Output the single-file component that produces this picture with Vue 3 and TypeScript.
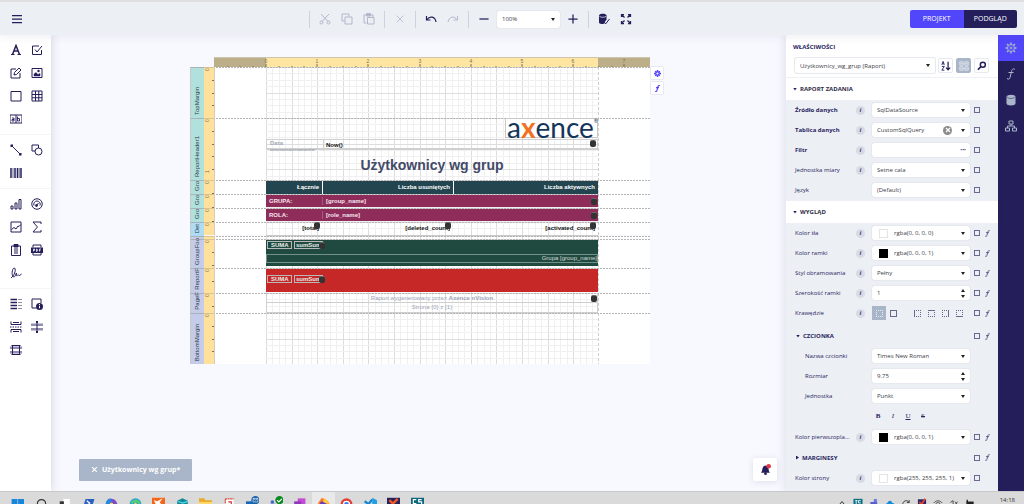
<script setup lang="ts">
import { ref } from 'vue'

const icons: Record<string, string> = {
  menu: '<path d="M2 5h20M2 12h20M2 19h20" stroke-width="2.500"/>',
  text: '<path d="M5 21 12 3l7 18M8 14h8" stroke-width="3"/><path d="M2 21h7M15 21h7" stroke-width="2.4"/>',
  check: '<path d="M16 4H3v17h18v-9"/><path d="m8 11 4 5L22 4"/>',
  edit: '<path d="M12 4H2v18h18V12"/><path d="m8 16 1-5 9-9 4 4-9 9z"/>',
  picture: '<path d="M2 3h20v18H2z"/><path d="M6 18v-4l4-3 4 4 4-2v5z" fill="currentColor" stroke-width="1"/><circle cx="15" cy="8" r="2.4" fill="currentColor" stroke="none"/>',
  panel: '<path d="M2 3h20v19H2z"/>',
  table: '<path d="M2 2h20v20H2zM9 2v20M15.500 2v20M2 9h20M2 15.500h20"/>',
  comb: '<path d="M0 4h24v16H0zM12 4v16" /><path d="M4 10h4v6H4v-3h4M15 7v9h4v-5h-4" stroke-width="1.800"/>',
  line: '<path d="m3 3 18 18"/><path d="M1 1h5v5H1zM18 18h5v5h-5z" fill="currentColor" stroke="none"/>',
  shape: '<path d="M9 14H2V2h13v6"/><circle cx="15" cy="15" r="7"/>',
  barcode: '<path d="M2 2v20M10 2v20M15 2v20M22 2v20" stroke-width="3"/><path d="M6 2v20M18.500 2v20" stroke-width="1.300"/>',
  chart: '<path d="M2 16h4v6H2zM10 10h4v12h-4zM18 3h4v19h-4z"/>',
  gauge: '<circle cx="12" cy="12" r="10.500"/><path d="M6 15a6.500 6.500 0 1 1 12 0M11 15l4-5"/><circle cx="11" cy="15" r="2" fill="currentColor"/>',
  spark: '<path d="M2 2h20v20H2zM3 17l5-4 4 3 4-6 2 1 4-4"/>',
  sigma: '<path d="M20 6V2H4l9 10-9 10h16v-4"/>',
  clip: '<path d="M3 4h18v19H3zM8 10h8M8 14h8M8 18h8"/><path d="M8 1h8v5H8z" fill="currentColor"/>',
  pdf: '<path d="M4 7V2h16v5M4 18v4h16v-4"/><path d="M0 7h24v11H0z" fill="currentColor" stroke="none"/><path d="M5 15v-5h2v3H5M11 10v5c3 0 3-5 0-5M17 15v-5h3M17 12.500h2" stroke="#fff" stroke-width="1.500"/>',
  sign: '<path d="M2 22C8 18 13 6 9 2 4 1 3 16 6 19c4 3 5-4 7-7-1 4-1 8 2 4 2-3 2 2 4 1l4-3"/>',
  toc: '<path d="M1 3h13M1 9h13M1 15h13M1 21h13" stroke-width="3"/><path d="M17 3h2M21 3h2M17 9h2M21 9h2M17 15h2M21 15h2M17 21h2M21 21h2"/>',
  info: '<path d="M11 20H2V2h18v8"/><circle cx="17" cy="17" r="7" fill="currentColor" stroke="none"/><path d="M17 12v2M17 15.500v5" stroke="#fff"/>',
  pagebreak: '<path d="M2 1v6h20V1M2 23v-6h20v6M6 3h12M6 21h12"/><path d="M0 12h24" stroke-dasharray="3 2"/>',
  cross: '<path d="M0 7.500h24M0 16.500h24" stroke-width="5" opacity=".5"/><path d="M12 1v22"/><path d="M12 0v4M12 20v4" stroke-width="4"/>',
  crossbox: '<path d="M0 7.500h24M0 16.500h24" stroke-width="5" opacity=".5"/><path d="M5 2v20M19 2v20M3 3h18M3 21h18"/>',
  cut: '<path d="m4 2 14 15M20 2 6 17"/><circle cx="5" cy="19" r="3"/><circle cx="19" cy="19" r="3"/>',
  copy: '<path d="M7 16H2V2h14v5M8 8h14v14H8z"/>',
  paste: '<path d="M7 20H2V4h18v4M9 9h13v13H9z"/><path d="M7 1h8v5H7z" fill="currentColor"/>',
  close: '<path d="m4 4 16 16M20 4 4 20"/>',
  undo: '<path d="M3 6v8h8M4 13c5-7 16-7 18 5" stroke-width="2.400"/>',
  redo: '<path d="M21 6v8h-8M20 13C15 6 4 6 2 18"/>',
  minus: '<path d="M1 12h22" stroke-width="3"/>',
  plus: '<path d="M1 12h22M12 1v22" stroke-width="3"/>',
  validate: '<path d="M2 5c0-5 15-5 15 0v8l-4 6-2 3C6 22 2 21 2 19z" fill="currentColor" stroke="none"/><path d="M3 7c3 2 10 2 13 0" stroke="#eceff4" stroke-width="1.500"/><path d="m11 17 4 5 8-10"/>',
  full: '<path d="M3 8V3h5M16 3h5v5M21 16v5h-5M8 21H3v-5M3 3l6 6M21 3l-6 6M21 21l-6-6M3 21l6-6" stroke-width="2.500"/>',
  gear: '<circle cx="12" cy="12" r="7"/><circle cx="12" cy="12" r="2"/><path d="M12 1v4M12 19v4M1 12h4M19 12h4M4 4l3 3M17 17l3 3M20 4l-3 3M7 17l-3 3" stroke-width="3"/>',
  gearSolid: '<circle cx="12" cy="12" r="6" stroke-width="5"/><path d="M12 0v5M12 19v5M0 12h5M19 12h5M4 4l3 3M17 17l3 3M20 4l-3 3M7 17l-3 3" stroke-width="5"/>',
  fx: '<path d="M20 3c-4-3-6 0-7 4l-3 12c-1 4-3 4-6 2M7 9h10"/>',
  db: '<path d="M3 6c0-6 18-6 18 0v13c0 5-18 5-18 0z" fill="currentColor" stroke="none"/><path d="M4 6c2 4 14 4 16 0" stroke-width="1" stroke="#241f5b"/>',
  tree: '<path d="M8 2h8v6H8zM1 16h8v6H1zM15 16h8v6h-8zM12 8v4M5 16v-4h14v4"/>',
  sort: '<path d="M2 9l3-8 3 8M3 7h4M2 13h6l-6 9h6" stroke-width="2.200"/><path d="M17 2v19M12 16l5 5 5-5" stroke-width="3"/>',
  group: '<path d="M2 2h8v8H2zM14 2h8v8h-8zM2 14h8v8H2zM14 14h8v8h-8z"/><path d="M4 6h4M16 6h4M4 18h4M16 18h4"/>',
  search: '<circle cx="14" cy="9" r="6" stroke-width="3.500"/><path d="m9 14-7 7" stroke-width="4"/>',
  bell: '<path d="M2 19c4-2 2-11 6-14 2-2 6-2 8 0 4 3 2 12 6 14z" fill="currentColor" stroke="none"/><circle cx="12" cy="21" r="3" fill="currentColor" stroke="none"/><circle cx="19" cy="5" r="5" fill="#e0364c" stroke="none"/>',
}

const toolGroups = [
  ['text', 'check', 'edit', 'picture', 'panel', 'table', 'comb'],
  ['line', 'shape', 'barcode'],
  ['chart', 'gauge', 'spark', 'sigma', 'clip', 'pdf', 'sign'],
  ['toc', 'info', 'pagebreak', 'cross', 'crossbox'],
]

interface Band { id: string; label: string; h: number; tone: string }
const bands: Band[] = [
  { id: 'top', label: 'TopMargin', h: 51, tone: 'mint' },
  { id: 'header', label: 'ReportHeader1', h: 62, tone: 'mint' },
  { id: 'heads', label: 'Gro', h: 14, tone: 'mint' },
  { id: 'group', label: 'Gro', h: 14, tone: 'mint' },
  { id: 'role', label: 'Gro', h: 14, tone: 'mint' },
  { id: 'detail', label: 'Det', h: 13, tone: 'sky' },
  { id: 'gap', label: '', h: 3, tone: 'lilac' },
  { id: 'gfoot', label: 'GroupFoo', h: 29, tone: 'lilac' },
  { id: 'rfoot', label: 'ReportF', h: 25, tone: 'lilac' },
  { id: 'pfoot', label: 'PageF', h: 20, tone: 'lilac' },
  { id: 'bottom', label: 'BottomMargin', h: 51, tone: 'lilac' },
]

const INCH = 51.2
const PAGE_X = 62
const PAGE_W = 332
const steps = (length: number, unit: number) =>
  Array.from({ length: Math.floor(length / unit) + 1 }, (_, i) => ({ i, at: Math.round(i * unit) }))
const columns = steps(PAGE_W, INCH / 8)
const hTicks = Array.from({ length: 32 }, (_, i) => ({ i: i - 3, at: Math.round(52 + (i - 3) * (INCH / 4)) }))
  .filter((t) => t.at < 436)

const task = ref('Użytkownicy_wg_grup (Raport)')

interface Row {
  id: string; label: string; kind: 'select' | 'color' | 'number' | 'text' | 'edges'
  value?: string; strong?: boolean; info?: boolean; fx?: boolean; swatch?: string; clear?: boolean
}
const taskRows: Row[] = [
  { id: 'source', label: 'Źródło danych', kind: 'select', value: 'SqlDataSource', strong: true, info: true },
  { id: 'table', label: 'Tablica danych', kind: 'select', value: 'CustomSqlQuery', strong: true, info: true, clear: true },
  { id: 'filter', label: 'Filtr', kind: 'text', value: '', strong: true, info: true },
  { id: 'unit', label: 'Jednostka miary', kind: 'select', value: 'Setne cala', info: true },
  { id: 'lang', label: 'Język', kind: 'select', value: '(Default)' },
]
const lookRows: Row[] = [
  { id: 'back', label: 'Kolor tła', kind: 'color', value: 'rgba(0, 0, 0, 0)', swatch: 'clear', info: true, fx: true },
  { id: 'border', label: 'Kolor ramki', kind: 'color', value: 'rgba(0, 0, 0, 1)', swatch: 'black', info: true, fx: true },
  { id: 'dash', label: 'Styl obramowania', kind: 'select', value: 'Pełny', info: true, fx: true },
  { id: 'bwidth', label: 'Szerokość ramki', kind: 'number', value: '1', info: true, fx: true },
  { id: 'edges', label: 'Krawędzie', kind: 'edges', info: true, fx: true },
]
const fontRows: Row[] = [
  { id: 'fname', label: 'Nazwa czcionki', kind: 'select', value: 'Times New Roman' },
  { id: 'fsize', label: 'Rozmiar', kind: 'number', value: '9.75' },
  { id: 'funit', label: 'Jednostka', kind: 'select', value: 'Punkt' },
]
const foreRow: Row = { id: 'fore', label: 'Kolor pierwszopla...', kind: 'color', value: 'rgba(0, 0, 0, 1)', swatch: 'black', info: true, fx: true }
const pageRow: Row = { id: 'page', label: 'Kolor strony', kind: 'color', value: 'rgba(255, 255, 255, 1)', swatch: 'clear', info: true }

type Block = { rows: Row[]; title?: string; sub?: string; open?: boolean; nested?: boolean; format?: boolean }
const blocks: Block[] = [
  { title: 'RAPORT ZADANIA', rows: taskRows },
  { title: 'WYGLĄD', rows: lookRows },
  { sub: 'CZCIONKA', open: true, rows: fontRows, nested: true, format: true },
  { rows: [foreRow] },
  { sub: 'MARGINESY', open: false, rows: [pageRow] },
]

const apps: { name: string; art: string }[] = [
  { name: 'Start', art: '<path d="M1 1h10v10H1zM12 1h10v10H12z" fill="#1787dc"/>' },
  { name: 'Szukaj', art: '<circle cx="11" cy="9" r="7" fill="none" stroke="#333" stroke-width="2"/>' },
  { name: 'Widok zadań', art: '<path d="M9 1h11v10H9z" fill="#fff"/><path d="M3 5h7v7H3z" fill="#333"/>' },
  { name: 'PowerShell', art: '<path d="M6 1h15l-4 13H2z" fill="#2b5fc4"/><path d="m8 4 5 4-4 3" stroke="#fff" fill="none" stroke-width="2"/>' },
  { name: 'Copilot', art: '<path d="M1 9C3 1 7-1 12 1l3 3-5 9H3z" fill="#2788e2"/><path d="M10 1c7-1 11 4 11 12h-9z" fill="#7a4cc8"/><circle cx="11" cy="10" r="3" fill="#ffd15c"/>' },
  { name: 'Edge', art: '<circle cx="11" cy="10" r="10" fill="#28a8c8"/><path d="M4 8c5-6 12-4 14 1" stroke="#54ce75" stroke-width="4" fill="none"/><circle cx="11" cy="9" r="2" fill="#f9d35d"/>' },
  { name: 'Axence', art: '<path d="M0-1h22v15H0z" fill="#f76516"/><path d="m3 3 6 2 9-5-5 7 4 4H7z" fill="#fff"/>' },
  { name: 'Konsola', art: '<path d="m2 4 9-4 9 4v10H2z" fill="#118999"/><path d="m3 5 8 3 9-3" stroke="#5dd9df" fill="none" stroke-width="2"/>' },
  { name: 'Pliki', art: '<path d="M0 0h9l2 3h11v11H0z" fill="#e8a92c"/><path d="M0 6h22v8H0z" fill="#ffd867"/>' },
  { name: 'Notatnik', art: '<path d="M4 1h14v14H4z" fill="#fff"/><path d="M4 1h14M4 1v12" stroke="#d94432" stroke-width="2" stroke-dasharray="3 1"/><path d="M9 6h5v6" stroke="#c33" fill="none" stroke-width="2"/>' },
  { name: 'Outlook', art: '<path d="M0 5h14v9H0z" fill="#1668ba"/><circle cx="16" cy="3" r="7" fill="#165fa7"/><path d="M12 0h8v6h-8zl4 3 4-3" fill="none" stroke="#fff"/>' },
  { name: 'Teams', art: '<circle cx="4" cy="6" r="3" fill="#4b62ca"/><path d="M0 9h10v5H0z" fill="#6276d8"/><circle cx="16" cy="3" r="7" fill="#0a8b22"/><path d="m12 3 3 3 5-5" fill="none" stroke="#fff" stroke-width="2"/>' },
  { name: 'Projekt', art: '<path d="M8 0h13v14H8z" fill="#c54bd5"/><path d="M2 5h12v9H2z" fill="#8d39ba"/>' },
  { name: 'Firefox', art: '<path d="M1 14C1 5 6 4 8-1c3 3 5 1 7 3 5 4 7 7 6 12z" fill="#ff7c24"/><circle cx="10" cy="10" r="5" fill="#673bc0"/><path d="m13-1 8 11-11-4z" fill="#ffd53e"/>' },
  { name: 'Chrome', art: '<circle cx="11" cy="10" r="10" fill="#e23f35"/><path d="M1 10c0 8 10 9 10 9v-9z" fill="#22a652"/><circle cx="11" cy="10" r="5" fill="#3978e9" stroke="#fff" stroke-width="2"/>' },
  { name: 'Code', art: '<path d="m1 5 13 9M14 2 4 14" stroke="#1688d1" stroke-width="4"/><path d="m14-1 8 4v11h-8z" fill="#219ee6"/>' },
  { name: 'Analiza', art: '<path d="M0-1h22v15H0z" fill="#26225d"/><path d="m4 3 6 6 8-8" fill="none" stroke="#f15822" stroke-width="4"/>' },
  { name: 'Skrypty', art: '<path d="M0-1h22v15H0z" fill="#0b667f"/><path d="M9 2H4v7h5M18 2h-5v4h5v5h-6" fill="none" stroke="#fff" stroke-width="2"/>' },
]
const tray: string[] = [
  '<path d="m6 12 5-6 5 6" fill="none" stroke="#222" stroke-width="2"/>',
  '<path d="M1 0h20v14H1z" fill="#0b7187"/><path d="M5 4h5M7 4v8M17 4h-5v5h5" stroke="#fff" fill="none" stroke-width="2"/>',
  '<circle cx="14" cy="4" r="4" fill="#7278e2"/><path d="M3 7h15v7H3z" fill="#555fca"/>',
  '<path d="M2 14c0-5 4-4 5-8 6-5 9 2 9 3 5 0 5 4 4 5z" fill="#158bdc"/>',
  '<path d="M4 13c-1-9 10-12 14-5V3M18 8h-5" fill="none" stroke="#333" stroke-width="2"/>',
  '<path d="M2 1h18v13H2z" fill="#29266a"/><path d="m5 7 5 5 8-12" fill="none" stroke="#e4432f" stroke-width="4"/>',
  '<path d="M2 9c4-6 14-6 18 0M5 12c4-5 8-5 12 0" fill="none" stroke="#444" stroke-width="2"/>',
  '<path d="m3 8 6-4v10M13 6l5 6M14 12l5-6" fill="none" stroke="#444" stroke-width="2"/>',
  '<path d="M3 6h16v8H3z" fill="#222"/><path d="M5 2v6" stroke="#222" stroke-width="3"/>',
]
</script>

<template>
  <div class="app">
    <header class="topbar">
      <button class="icon menu" aria-label="Menu"><svg viewBox="0 0 24 24" v-html="icons.menu" /></button>
      <div class="tools">
        <i class="sep" />
        <button class="icon off" aria-label="Wytnij"><svg viewBox="0 0 24 24" v-html="icons.cut" /></button>
        <button class="icon off" aria-label="Kopiuj"><svg viewBox="0 0 24 24" v-html="icons.copy" /></button>
        <button class="icon off" aria-label="Wklej"><svg viewBox="0 0 24 24" v-html="icons.paste" /></button>
        <i class="sep" />
        <button class="icon off small" aria-label="Usuń"><svg viewBox="0 0 24 24" v-html="icons.close" /></button>
        <i class="sep" />
        <button class="icon" aria-label="Cofnij"><svg viewBox="0 0 24 24" v-html="icons.undo" /></button>
        <button class="icon off" aria-label="Ponów"><svg viewBox="0 0 24 24" v-html="icons.redo" /></button>
        <i class="sep" />
        <div class="zoom">
          <button class="icon small" aria-label="Pomniejsz"><svg viewBox="0 0 24 24" v-html="icons.minus" /></button>
          <span class="pick"><select aria-label="Powiększenie"><option>100%</option></select></span>
          <button class="icon small" aria-label="Powiększ"><svg viewBox="0 0 24 24" v-html="icons.plus" /></button>
        </div>
        <i class="sep" />
        <button class="icon" aria-label="Sprawdź"><svg viewBox="0 0 24 24" v-html="icons.validate" /></button>
        <button class="icon" aria-label="Pełny ekran"><svg viewBox="0 0 24 24" v-html="icons.full" /></button>
      </div>
      <div class="modes">
        <button class="mode on">PROJEKT</button>
        <button class="mode">PODGLĄD</button>
      </div>
    </header>

    <main class="body">
      <nav class="toolbox" aria-label="Elementy">
        <div v-for="(g, gi) in toolGroups" :key="gi" class="toolgroup">
          <button v-for="t in g" :key="t" class="icon" :aria-label="t"><svg viewBox="0 0 24 24" v-html="icons[t]" /></button>
        </div>
      </nav>

      <section class="canvas">
        <div class="stage">
          <div class="report">
            <div class="hruler">
              <svg width="436" height="10" viewBox="0 0 436 10">
                <rect width="436" height="10" fill="#bcae88" />
                <rect x="52" width="332" height="10" fill="#ffe5a2" />
                <path d="M0 .5h436" stroke="#cfc5ad" />
                <g v-for="t in hTicks" :key="t.i">
                  <path :d="`M${t.at} 10v${t.i % 4 === 0 ? -3 : -1}`" stroke="#77705e" />
                  <text v-if="t.i % 4 === 0" :x="t.at" y="6" text-anchor="middle" class="num">{{ t.i / 4 }}</text>
                </g>
              </svg>
            </div>
            <div v-for="b in bands" :key="b.id" class="band" :class="`band-${b.id}`">
              <div class="tag" :class="b.tone"><span>{{ b.label }}</span></div>
              <svg class="paper" width="446" :height="b.h" :viewBox="`0 0 446 ${b.h}`">
                <rect width="446" :height="b.h" fill="#fff" />
                <rect width="10" :height="b.h" fill="#ffe19b" />
                <template v-for="c in columns" :key="'c' + c.i">
                  <path :d="`M${PAGE_X + c.at}.5 0V${b.h}`" :stroke="c.i % 4 === 0 ? '#dcdcdc' : '#f0f0f0'" />
                </template>
                <template v-for="r in steps(b.h, INCH / 8)" :key="'r' + r.i">
                  <path :d="`M${PAGE_X} ${r.at}.5h${PAGE_W}`" :stroke="r.i % 4 === 0 ? '#dedede' : '#f0f0f0'" />
                </template>
                <template v-for="r in steps(b.h, INCH / 4)" :key="'t' + r.i">
                  <path :d="`M8 ${r.at}.5h2`" stroke="#77705e" />
                  <text v-if="r.i % 4 === 0 && r.at + 5 < b.h" class="num" :transform="`translate(5 ${r.at + 4}) rotate(-90)`">{{ r.i / 4 }}</text>
                </template>
                <path :d="`M${PAGE_X + PAGE_W}.5 0V${b.h}`" stroke="#cfcfcf" stroke-dasharray="3 2" />
                <path d="M0 .5h10" stroke="#d9c591" />
                <path d="M12 .5h434" stroke="#b4b4b4" stroke-dasharray="2 1" />
                <path :d="`M10.5 0V${b.h}`" stroke="#d4cdb9" />
              </svg>

              <div v-if="b.id === 'header'" class="content header">
                <div class="logo">a<b>x</b>ence<sup>®</sup></div>
                <div class="meta">
                  <span class="meta-label">Data wygenerowania:</span>
                  <span class="meta-value">Now()</span>
                  <i class="source" />
                </div>
                <h1>Użytkownicy wg grup</h1>
              </div>
              <div v-else-if="b.id === 'heads'" class="content cols heads">
                <span>Łącznie</span><span>Liczba usuniętych</span><span>Liczba aktywnych</span>
              </div>
              <div v-else-if="b.id === 'group'" class="content plum"><span>GRUPA:</span><span>[group_name]</span><i class="source" /></div>
              <div v-else-if="b.id === 'role'" class="content plum"><span>ROLA:</span><span>[role_name]</span><i class="source" /></div>
              <div v-else-if="b.id === 'detail'" class="content cols detail">
                <span>[total]<i class="source" /></span><span>[deleted_count]<i class="source" /></span><span>[activated_count]<i class="source" /></span>
              </div>
              <div v-else-if="b.id === 'gfoot'" class="content sums green">
                <div class="sum"><span>SUMA</span><span>sumSum<i class="source" /></span></div>
                <div class="note">Grupa [group_name]</div>
              </div>
              <div v-else-if="b.id === 'rfoot'" class="content sums red">
                <div class="sum"><span>SUMA</span><span>sumSum<i class="source" /></span></div>
              </div>
              <div v-else-if="b.id === 'pfoot'" class="content foot">
                <div>Raport wygenerowany przez&nbsp;<b>Axence nVision</b><i class="source" /></div>
                <div>Strona {0} z {1}</div>
              </div>
            </div>
          </div>
          <div class="quick">
            <button class="icon" aria-label="Ustawienia"><svg viewBox="0 0 24 24" v-html="icons.gearSolid" /></button>
            <button class="icon" aria-label="Wyrażenia"><svg viewBox="0 0 24 24" v-html="icons.fx" /></button>
          </div>
        </div>
        <footer class="docs">
          <button class="doc"><svg viewBox="0 0 24 24" v-html="icons.close" />Użytkownicy wg grup*</button>
          <button class="bell icon" aria-label="Powiadomienia"><svg viewBox="0 0 24 24" v-html="icons.bell" /></button>
        </footer>
      </section>

      <aside class="props">
        <div class="props-head">
          <h2>WŁAŚCIWOŚCI</h2>
          <div class="finder">
            <span class="pick outlined"><select v-model="task" aria-label="Element"><option>{{ task }}</option></select></span>
            <button class="icon tile" aria-label="Sortuj"><svg viewBox="0 0 24 24" v-html="icons.sort" /></button>
            <button class="icon tile active" aria-label="Grupuj"><svg viewBox="0 0 24 24" v-html="icons.group" /></button>
            <button class="icon tile" aria-label="Szukaj"><svg viewBox="0 0 24 24" v-html="icons.search" /></button>
          </div>
        </div>
        <section v-for="(bl, bi) in blocks" :key="bi" :class="{ nested: bl.nested }">
          <button v-if="bl.title" class="section"><i class="caret" />{{ bl.title }}</button>
          <div v-if="bl.sub" class="row sub">
            <button><i class="caret" :class="{ shut: !bl.open }" />{{ bl.sub }}</button>
            <input type="checkbox" :aria-label="bl.sub" />
            <button class="fx" aria-label="Wyrażenie"><svg viewBox="0 0 24 24" v-html="icons.fx" /></button>
          </div>
          <div class="rows" :class="{ first: bl.title }">
            <div v-for="r in bl.rows" :key="r.id" class="row">
              <label :for="r.id" :class="{ strong: r.strong }">{{ r.label }}</label>
              <button v-if="r.info" class="help" :aria-label="'Informacja: ' + r.label">i</button>
              <span v-if="r.kind === 'select' || r.kind === 'color'" class="pick field" :class="{ tinted: r.swatch }">
                <select :id="r.id"><option>{{ r.value }}</option></select>
                <i v-if="r.swatch" class="swatch" :class="r.swatch" />
                <button v-if="r.clear" class="wipe" aria-label="Wyczyść"><svg viewBox="0 0 24 24" v-html="icons.close" /></button>
              </span>
              <span v-else-if="r.kind === 'number'" class="field entry">
                <input :id="r.id" type="text" inputmode="decimal" :value="r.value" />
                <span class="spin"><button aria-label="Więcej" class="up" /><button aria-label="Mniej" class="down" /></span>
              </span>
              <span v-else-if="r.kind === 'text'" class="field entry">
                <input :id="r.id" type="text" :value="r.value" />
                <button class="dots" aria-label="Edytuj">•••</button>
              </span>
              <span v-else class="field edges">
                <button :id="r.id" class="pressed" aria-label="Brak"><i /></button>
                <button class="all" aria-label="Wszystkie"><i /></button>
                <button v-for="s in ['left', 'top', 'right', 'bottom']" :key="s" :class="s" :aria-label="s"><i /></button>
              </span>
              <template v-if="!bl.nested">
                <input type="checkbox" :aria-label="'Resetuj: ' + r.label" />
                <button v-if="r.fx" class="fx" aria-label="Wyrażenie"><svg viewBox="0 0 24 24" v-html="icons.fx" /></button>
              </template>
            </div>
            <div v-if="bl.format" class="row">
              <div class="field format">
                <button><b>B</b></button><button><em>I</em></button><button><u>U</u></button><button><s>S</s></button>
              </div>
            </div>
          </div>
        </section>
      </aside>

      <nav class="rail" aria-label="Panele">
        <button class="icon on" aria-label="Właściwości"><svg viewBox="0 0 24 24" v-html="icons.gear" /></button>
        <button class="icon" aria-label="Wyrażenia"><svg viewBox="0 0 24 24" v-html="icons.fx" /></button>
        <button class="icon" aria-label="Dane"><svg viewBox="0 0 24 24" v-html="icons.db" /></button>
        <button class="icon" aria-label="Struktura"><svg viewBox="0 0 24 24" v-html="icons.tree" /></button>
      </nav>
    </main>

    <footer class="taskbar">
      <div class="apps">
        <button v-for="a in apps" :key="a.name" :aria-label="a.name" :class="{ current: a.name === 'Firefox' }"><svg viewBox="0 -4 22 22" v-html="a.art" /></button>
      </div>
      <div class="tray"><svg v-for="(t, i) in tray" :key="i" viewBox="0 -4 22 22" v-html="t" /></div>
      <time>14:18</time>
    </footer>
  </div>
</template>

<style>
html, body, #app { height: 100%; }
</style>

<style scoped>
* { box-sizing: border-box; }
.app {
  display: flex; flex-direction: column; height: 100vh; overflow: hidden;
  font-family: "Open Sans", "Noto Sans", sans-serif; font-size: 6px; line-height: 8px; color: #29255f;
  background: #f8f9ff;
}
button, select, input { font: inherit; color: inherit; margin: 0; padding: 0; border: 0; background: none; }
button { cursor: pointer; }
svg { display: block; }
i { font-style: normal; }
.icon { display: grid; place-items: center; color: #241f5b; }
.icon svg, .fx svg, .doc svg, .wipe svg { fill: none; stroke: currentColor; stroke-width: 2; }

.topbar {
  flex: none; display: flex; align-items: center; height: 35px; padding-right: 7px; padding-top: 1px;
  border-top: 2px solid #dfdfe1; background: #eceff4; position: relative; z-index: 2;
  box-shadow: 0 2px 8px rgba(60, 60, 100, .08);
}
.menu { width: 32px; padding-left: 2px; }
.menu svg { width: 12px; height: 12px; }
.tools { flex: 1; display: flex; align-items: center; justify-content: center; gap: 8px; }
.tools .icon { width: 14px; height: 16px; }
.tools svg { width: 12px; height: 12px; }
.tools .small svg { width: 10px; height: 10px; }
.tools .off { color: #b5b6cb; }
.sep { width: 1px; height: 17px; background: #cdd2de; }
.zoom { display: flex; align-items: center; gap: 6px; }
.zoom .pick { width: 63px; height: 17px; }
.modes { display: flex; width: 107px; height: 18px; border-radius: 2px; overflow: hidden; }
.mode { flex: 1; background: #241f5b; color: #fff; font-size: 7px; }
.mode.on { background: #5246fb; }

.pick { display: grid; align-items: center; min-width: 0; background: #fff; border-radius: 2px; box-shadow: 0 0 1px rgba(60, 70, 110, .35); }
.pick > * { grid-area: 1 / 1; }
.pick select { appearance: none; width: 100%; height: 100%; padding: 0 14px 0 5px; color: #3c3c46; line-height: 8px; }
.pick::after {
  content: ""; grid-area: 1 / 1; justify-self: end; margin-right: 5px; pointer-events: none;
  border: 2px solid transparent; border-top: 3px solid #222; border-bottom: 0;
}

.body { flex: 1; min-height: 0; display: flex; }
.toolbox { flex: none; width: 51px; padding-top: 3px; background: #fff; box-shadow: 2px 0 8px rgba(60, 60, 100, .15); z-index: 1; }
.toolgroup { display: grid; grid-template-columns: 21px 21px; grid-auto-rows: 23px; padding: 0 5px 4px; }
.toolgroup + .toolgroup { padding-top: 3px; border-top: 1px solid #f5f5f9; }
.toolgroup svg { width: 12px; height: 12px; }

.canvas { flex: 1; min-width: 0; display: flex; flex-direction: column; }
.stage { display: flex; justify-content: center; padding: 22px 0 0 16px; }
.report { width: 460px; font-family: "Liberation Sans", Arial, sans-serif; line-height: 7px; }
.hruler { padding-left: 24px; }
.num { font: 5px "Liberation Sans", Arial, sans-serif; fill: #77705e; }
.band { display: grid; grid-template-columns: 14px 62px 332px 52px; }
.tag {
  grid-area: 1 / 1; min-height: 0; display: flex; flex-direction: column; justify-content: flex-end; align-items: center;
  padding-bottom: 3px; color: #2f3a44; border-top: 1px solid #a9b3bb; border-left: 1px solid #c4cad0; contain: size;
}
.band-gap .tag { padding: 0; }
.tag span { writing-mode: vertical-rl; transform: rotate(180deg); white-space: nowrap; }
.mint { background: #b1e1dc; }
.sky { background: #aedcf2; }
.lilac { background: #c5cce9; }
.paper { grid-area: 1 / 2 / 2 / 5; }
.content { grid-area: 1 / 3; min-width: 0; min-height: 0; font-weight: 700; }
.source { flex: none; width: 6px; height: 7px; border-radius: 2px; background: #333; border-top: 1px solid #666; }

.header { display: flex; flex-direction: column; }
.logo {
  align-self: flex-end; display: flex; width: 93px; height: 20px; padding-left: 1px; border: 1px solid #c8c8c8;
  font-family: Lato, sans-serif; font-size: 28px; font-weight: 400; line-height: 16px; color: #14355a; background: #fff;
}
.logo b { color: #f37021; font-weight: 700; }
.logo sup { font-size: 5px; line-height: 5px; }
.meta { display: grid; grid-template-columns: 56px 1fr 7px; height: 11px; margin-top: 1px; border: 1px solid #d0d0d0; border-bottom-width: 2px; }
.meta-label { color: #a3a7b5; padding: 0 3px; overflow: hidden; }
.meta-value { padding: 2px; color: #111; border-left: 1px solid #d0d0d0; }
h1 { margin: 0; flex: 1; display: grid; place-items: center; font-size: 14px; line-height: 18px; color: #434a68; }
.cols { display: grid; grid-template-columns: 56px 131px 1fr; align-items: stretch; }
.cols > span { display: flex; justify-content: flex-end; align-items: center; padding-right: 3px; }
.heads { color: #fff; margin-top: 1px; }
.heads > span { background: #23454f; }
.heads > span + span { border-left: 1px solid #fff; }
.detail { color: #111; border-bottom: 1px solid #c8c8c8; }
.detail .source { margin: 0 -1px 6px -5px; }
.plum { display: grid; grid-template-columns: 56px 1fr 7px; align-items: center; margin: 1px 0; color: #f6e5ee; background: #8f2d5a; }
.plum > span { padding: 1px 3px 0; }
.plum > span + span { border-left: 1px solid #a55a7d; }
.sums { margin: 1px 0; color: #e7eeea; }
.green { background: #204a3f; margin-bottom: 2px; }
.red { background: #c62828; }
.sum { display: flex; gap: 2px; padding: 1px; }
.red .sum { padding-top: 6px; }
.sum span { display: flex; height: 8px; width: 29px; align-items: center; border: 1px solid #b9b9b9; padding-left: 1px; }
.sum span:first-child { width: 25px; padding-left: 3px; }
.sum .source { margin-left: -2px; }
.green .note { margin-top: 4px; height: 9px; text-align: right; border: 1px solid #72918a; color: #d3d9d6; font-weight: 400; }
.foot { color: #9da4b6; font-weight: 400; display: grid; grid-template-rows: 10px 10px; }
.foot div { display: flex; align-items: center; justify-content: center; border: 1px solid #cfcfcf; border-top: 0; }
.foot div:first-child { padding: 2px 0 0; white-space: nowrap; }
.foot div:first-child::before { content: ""; margin-right: auto; width: 6px; }
.foot .source { margin-left: auto; }
.quick { width: 13px; padding: 10px 0 0 1px; display: grid; align-content: start; gap: 3px; }
.quick .icon { width: 12px; height: 12px; color: #5246fb; background: #fff; box-shadow: 0 0 1px rgba(60, 70, 110, .5); }
.quick svg { width: 7px; height: 7px; stroke-width: 4; }

.docs { margin-top: auto; display: flex; align-items: center; justify-content: space-between; padding: 0 9px 10px 28px; }
.doc { display: flex; align-items: center; gap: 4px; height: 22px; padding: 0 12px; font-size: 7px; font-weight: 700; color: #fff; background: #a9b5c8; border-radius: 1px; }
.doc svg { width: 7px; height: 7px; stroke-width: 4; }
.bell { width: 24px; height: 23px; background: #fff; border-radius: 2px; box-shadow: 0 1px 6px rgba(60, 60, 100, .15); }
.bell svg { width: 11px; height: 11px; }

.props { flex: none; width: 212px; overflow: hidden; background: #eceff4; box-shadow: -2px 0 8px rgba(60, 60, 100, .12); z-index: 1; }
.props-head { background: #fff; padding: 8px 9px 4px 7px; border-bottom: 1px solid #eef0f5; }
h2 { margin: 0 0 7px; font-size: 6px; line-height: 8px; font-weight: 700; }
.finder { display: grid; grid-template-columns: 1fr 15px 15px 15px; gap: 3px; padding-left: 2px; height: 15px; }
.outlined { box-shadow: 0 0 0 1px #e6e9ef; }
.tile { border: 1px solid #e6e9ef; border-radius: 2px; }
.tile svg { width: 10px; height: 10px; stroke-width: 3; }
.tile.active { background: #a9b5c8; color: #e6eaf1; border-color: #a9b5c8; }
.tile.active svg { stroke-width: 2; }
.section { display: flex; align-items: center; gap: 3px; width: 100%; height: 22px; padding-left: 7px; font-weight: 700; color: #2d2b45; background: #fff; }
.caret { width: 4px; height: 3px; background: #241f5b; clip-path: polygon(0 0, 100% 0, 50% 100%); }
.caret.shut { width: 3px; height: 4px; clip-path: polygon(0 0, 100% 50%, 0 100%); }
.rows.first { padding-bottom: 1px; }
.row { display: grid; grid-template-columns: 1fr 12px 98px 6px 6px; column-gap: 4px; align-items: center; height: 20px; padding: 0 8px 0 9px; }
.row > label { grid-column: 1; white-space: nowrap; }
.strong { font-weight: 700; }
.help { grid-column: 2; width: 9px; height: 9px; border-radius: 50%; background: #d8dae5; color: #4a4870; font: italic 700 7px/9px "Liberation Serif", serif; }
.field { grid-column: 3; height: 14px; }
.row > input { grid-column: 4; appearance: none; width: 6px; height: 6px; border: 1px solid #6a6891; }
.fx { grid-column: 5; color: #55527f; }
.fx svg { width: 7px; height: 7px; stroke-width: 3; }
.sub { height: 21px; }
.sub button:first-child { grid-column: 1 / 4; display: flex; align-items: center; gap: 3px; padding-left: 1px; font-weight: 700; }
.nested { padding: 2px 0 1px; }
.nested .sub { height: 20px; }
.nested .rows label { padding-left: 10px; }
.tinted select { padding-left: 22px; }
.swatch { width: 9px; height: 9px; margin-left: 7px; pointer-events: none; }
.black { background: #000; }
.clear { border: 1px solid #e3e3e8; background: #fff; }
.wipe { justify-self: end; width: 9px; height: 9px; margin-right: 18px; display: grid; place-items: center; border-radius: 50%; background: #8b8b8b; color: #fff; }
.wipe svg { width: 6px; height: 6px; stroke-width: 5; }
.entry { display: flex; background: #fff; border-radius: 2px; box-shadow: 0 0 1px rgba(60, 70, 110, .35); }
.entry input { flex: 1; min-width: 0; padding-left: 5px; color: #3c3c46; }
.spin { display: flex; flex-direction: column; justify-content: center; gap: 3px; padding-right: 5px; }
.spin button { border: 2px solid transparent; }
.spin .up { border-top: 0; border-bottom: 3px solid #222; }
.spin .down { border-bottom: 0; border-top: 3px solid #222; }
.dots { padding-right: 4px; font-size: 5px; }
.edges { display: flex; }
.edges button { width: 14px; height: 14px; display: grid; place-items: center; }
.edges i { width: 7px; height: 7px; border: 1px dotted #6a6891; }
.edges .all { margin-right: 10px; }
.edges .all i { border-style: solid; }
.edges .left i { border-left-style: solid; }
.edges .top i { border-top-style: solid; }
.edges .right i { border-right-style: solid; }
.edges .bottom i { border-bottom-style: solid; }
.edges .pressed { background: #a9b5c8; }
.edges .pressed i { border-color: #e8ecf2; }
.format { display: flex; align-items: center; }
.format button { width: 15px; padding-right: 3px; font: 7px/10px "Liberation Serif", serif; }

.rail { flex: none; width: 26px; background: #241f5b; }
.rail .icon { width: 26px; height: 26px; color: #a9b5c8; }
.rail .on { background: #5246fb; }
.rail svg { width: 12px; height: 12px; }

.taskbar { flex: none; display: flex; align-items: flex-start; height: 13px; padding: 0 9px 0 6px; overflow: hidden; color: #333; background: #dadada; border-top: 1px solid #c8c8c8; position: relative; z-index: 3; }
.apps { display: flex; justify-content: space-between; width: 423px; }
.apps button { width: 23px; height: 20px; padding: 4px 5px 0; display: grid; place-items: start; }
.apps .current { background: #e9e9e9; }
.apps svg { width: 13px; height: 13px; }
.tray { display: flex; gap: 6px; margin-left: auto; padding-top: 5px; }
.tray svg { width: 10px; height: 10px; }
time { margin-left: 25px; padding-top: 4px; font-size: 6px; line-height: 8px; }
</style>
